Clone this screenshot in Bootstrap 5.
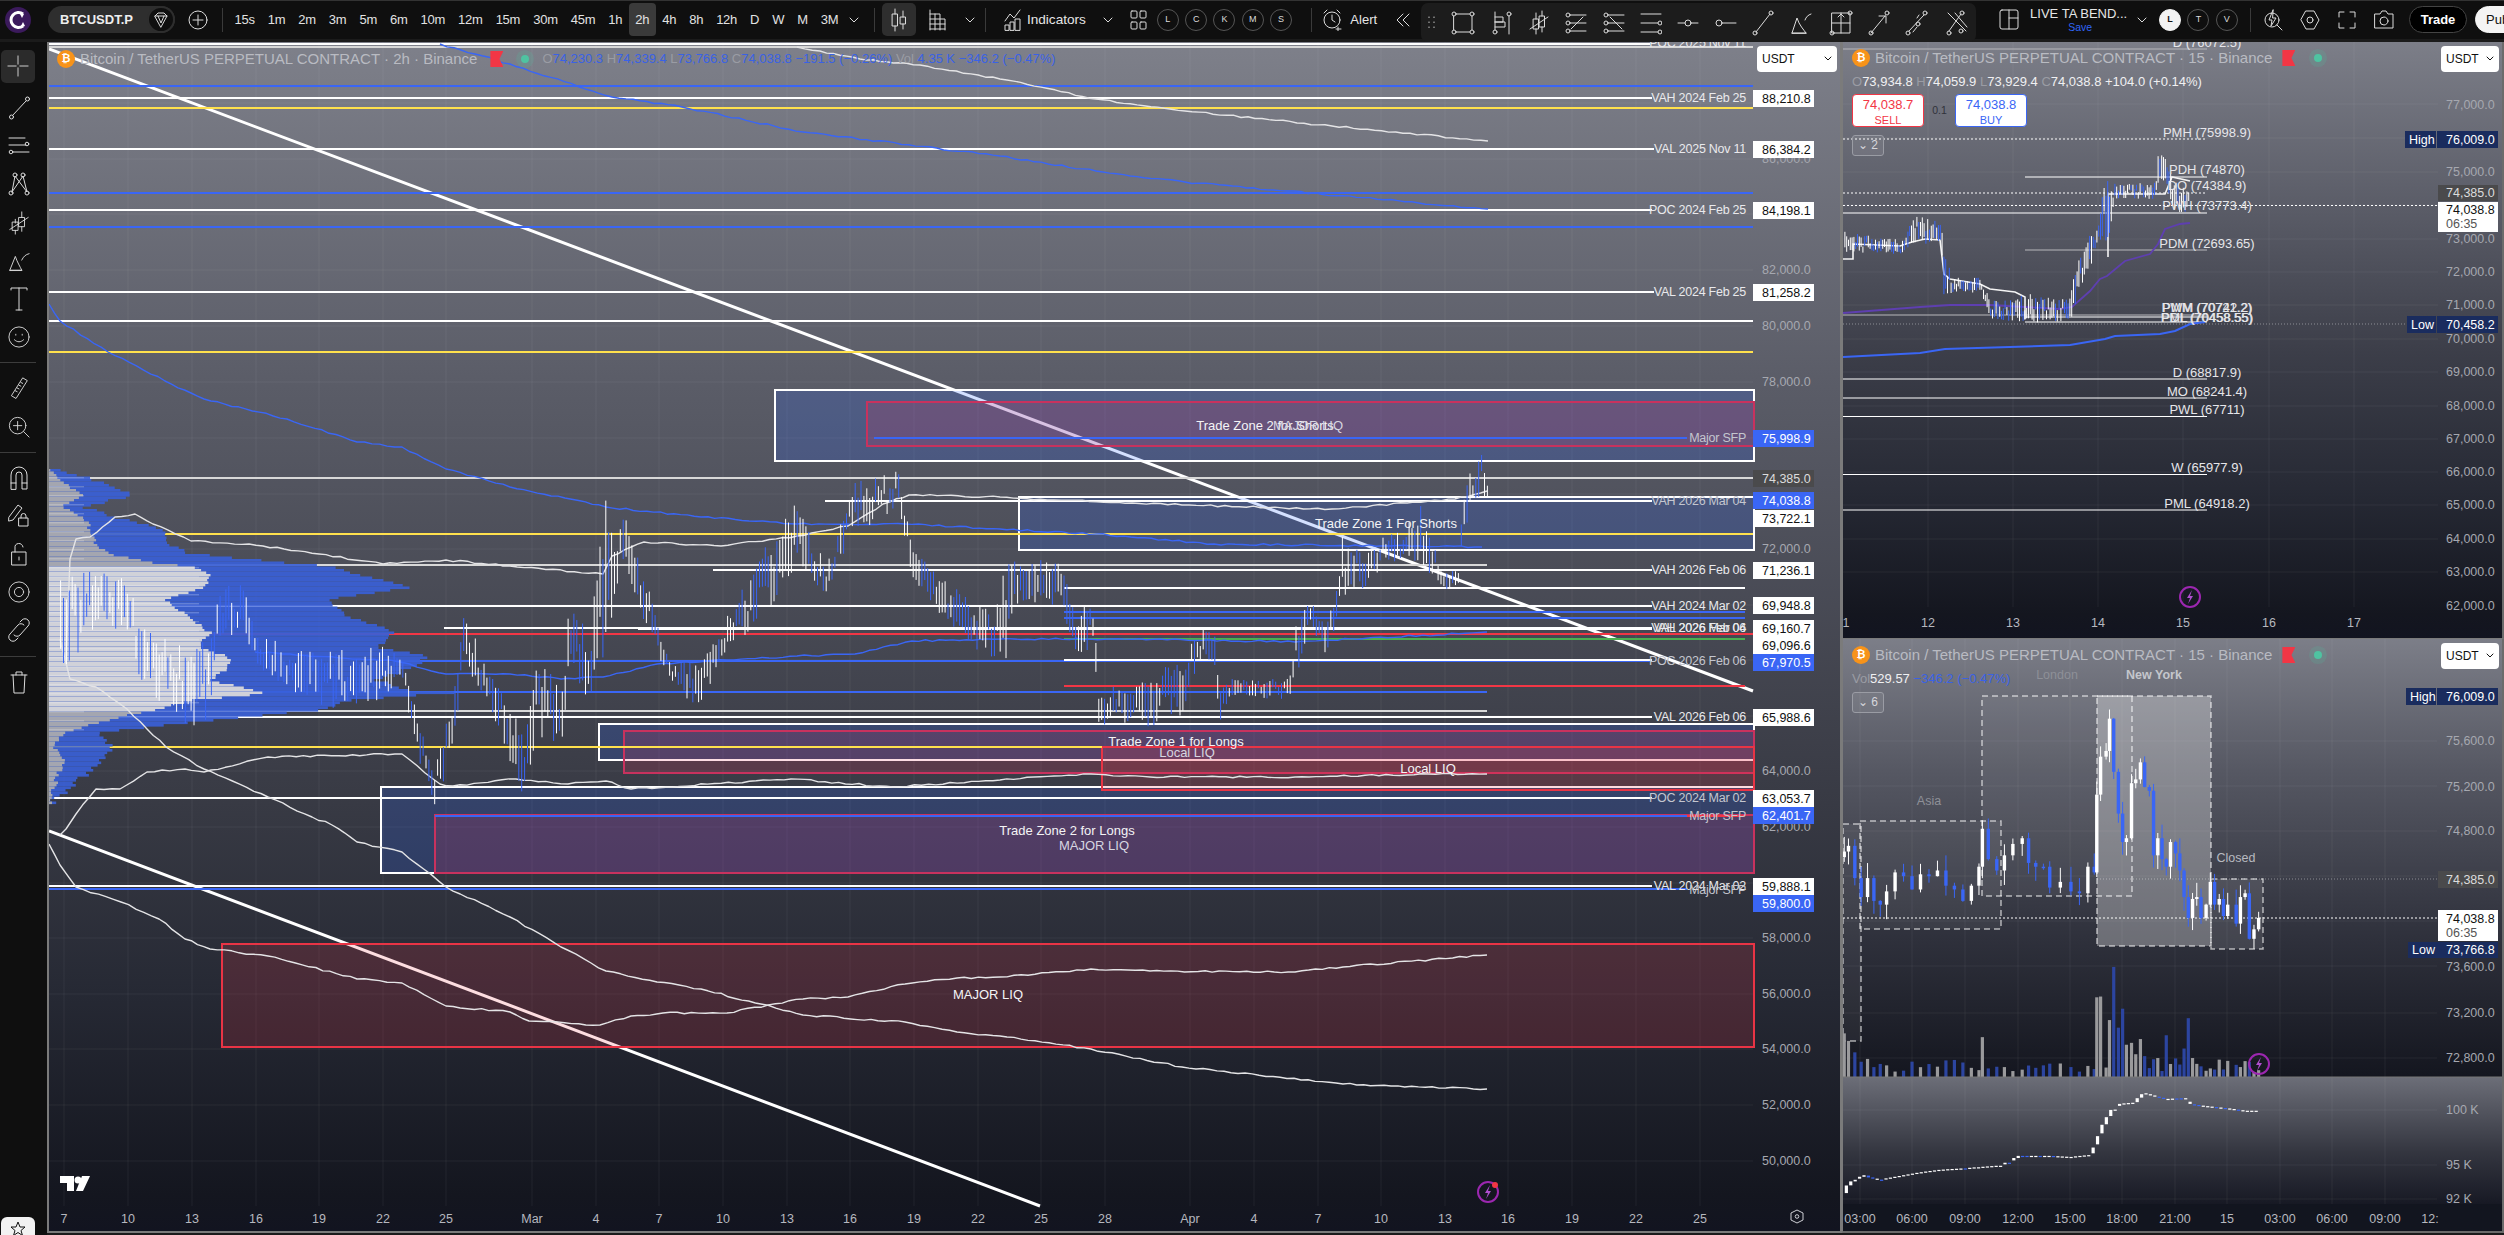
<!doctype html>
<html lang="en">
<head>
<meta charset="utf-8">
<title>BTCUSDT.P</title>
<link href="https://cdn.jsdelivr.net/npm/bootstrap@5.3.0/dist/css/bootstrap.min.css" rel="stylesheet">
<style>
html,body{height:100%;margin:0;background:#1b1b1b;overflow:hidden;font-family:"Liberation Sans",sans-serif}
.app{width:2504px;height:1235px;position:relative;overflow:hidden}
.topbar{height:39px;background:#0f0f0f;border-top:1px solid #333;color:#e6e6e6;font-size:13px;white-space:nowrap}
.ico{fill:none;stroke:#dcdcdc;stroke-width:1;stroke-linecap:round;stroke-linejoin:round;flex:none;display:block}
.logo-c{margin-left:4px;width:28px;height:30px}
.sym-pill{margin-left:16px;width:127px;height:27px;background:#2e2e2e;border-radius:14px;font-weight:700;padding-left:12px;font-size:13px;color:#eee}
.sym-end{width:28px;height:27px;background:#0f0f0f;border:2px solid #2e2e2e;border-radius:50%}
.plus{margin-left:13px}
.vsep{width:1px;height:24px;background:#3a3a3a;flex:none}
.s14{margin-left:14px}
.tfs{margin-left:5px}
.tf{padding:0 6.5px;height:33px;line-height:33px;border-radius:4px;letter-spacing:-.25px;color:#e2e2e2}
.tf.on{background:#3a3a3a}
.mx9{margin-left:9px}.mx7{margin-left:7px}.mx10{margin-left:10px}.mx12{margin-left:12px}.mx17{margin-left:17px}.mx6{margin-left:6px}.mx4{margin-left:4px}.mx15{margin-left:15px}.mx19{margin-left:19px}.mx18{margin-left:18px}.mx13{margin-left:13px}
.ind-t{font-size:13.6px}
.act-box{width:34px;height:33px;background:#2e2e2e;border-radius:5px}
.circ{width:22px;height:22px;border:1px solid #555;border-radius:50%;font-size:9px;margin-right:6.3px;flex:none;color:#dcdcdc}
.circ.full{background:#f2f2f2;color:#111;border-color:#f2f2f2;font-weight:700}
.floatbar{position:absolute;left:1421px;top:3px;width:555px;height:39px;background:#1c1c1c;border-radius:7px;z-index:5;padding:0 7px 0 7px}
.right-tools{margin-left:auto;margin-right:-41px}
.layout-name{line-height:1;width:100px;margin-left:11px}
.layout-name b{font-weight:400;font-size:13px;display:block}
.layout-name span{font-size:10.5px;color:#2f66f6;display:block;text-align:center;margin-top:2px}
.pill{height:27px;border-radius:14px;font-size:13px;font-weight:700;line-height:25px;border:1px solid #444}
.pill.dark{background:#000;color:#fff;width:58px}
.pill.lite{background:#f4f4f4;color:#111;width:70px;margin-left:8px;font-weight:400;border-color:#f4f4f4;padding-left:10px}
.content{height:1195px;margin-top:3px}
.side{width:47px;background:#0f0f0f;padding-top:8px;position:relative;flex:none}
.side .ico{margin:0 auto;width:22px;height:24px}
.side-wrap{width:37px}
.sl{height:38.2px}
.crossbtn{width:34px;height:33px;background:#2b2b2b;border-radius:5px;margin-left:1px}
.sd{height:1px;background:#3c3c3c;width:36px}
.starbox{position:absolute;left:1px;top:1175px;width:34px;height:24px;background:#f2f2f2;border-radius:6px}
.panem{position:relative;width:1795px;height:1191px;border:2px solid #7b7b7b;border-top:0;flex:none;background:linear-gradient(180deg,#7e808a 0,#5a5c67 29%,#383a44 64%,#262934 80%,#14161f 97%,#121420 100%);overflow:hidden}
.panecol{width:662px;flex:none}
.panet{position:relative;height:597px;border-left:1px solid #7b7b7b;border-right:2px solid #6b6b6b;border-bottom:1px solid #7b7b7b;background:linear-gradient(180deg,#7c7e88 0,#5a5c67 28%,#3c3e49 52%,#262934 76%,#14161f 96%,#121420 100%);overflow:hidden}
.paneb{position:relative;height:594px;border-left:1px solid #7b7b7b;border-right:2px solid #6b6b6b;border-bottom:2px solid #6b6b6b;background:linear-gradient(180deg,#6c6e78 0,#33353f 60%,#171924 100%) 0 438px/100% 127px no-repeat,linear-gradient(180deg,#7c7e88 0,#565863 30%,#2f313c 68%,#14161f 100%) 0 0/100% 438px no-repeat,#12151f;overflow:hidden}
.chart{display:block;position:absolute;left:0;top:0}
.chart text{font-family:"Liberation Sans",sans-serif;font-size:12.5px}
.g{stroke:rgba(255,255,255,.06);fill:none}
.lw{stroke:#fff;stroke-width:2;fill:none}
.lg{stroke:#d8d8d8;stroke-width:2;fill:none}
.lb{stroke:#3a66f5;stroke-width:2;fill:none}
.ly{stroke:#ffe14d;stroke-width:2;fill:none}
.lr{stroke:#f23645;stroke-width:2;fill:none}
.lgr{stroke:#4caf50;stroke-width:2;fill:none}
.diag{stroke:#fff;stroke-width:3;fill:none}
.cw{stroke:#e4e4e6;stroke-width:1.4;fill:none;stroke-linejoin:round}
.cb{stroke:#3a66f5;stroke-width:1.4;fill:none;stroke-linejoin:round}
.zw{fill:rgba(41,98,255,.2);stroke:#fff;stroke-width:2}
.zc{fill:rgba(235,50,90,.17);stroke:#c8325e;stroke-width:2}
.zr{fill:rgba(242,54,69,.17);stroke:#e93445;stroke-width:2}
.lab{fill:#e9e9ec;text-anchor:end;letter-spacing:-.25px}
.lab2{fill:#c4c6cf;text-anchor:end;letter-spacing:-.25px}
.ax{fill:#a6a8b0}
.mid{fill:#f4f4f6;text-anchor:middle;font-size:13px!important}
.mid2{fill:#d6d6e0;text-anchor:middle;font-size:13px!important}
.tgw{fill:#fff}.tgb{fill:#3a66f5}.tgg{fill:#4a4a4c}.tgn{fill:#1a2c5e}
.tx-k{fill:#111}.tx-w{fill:#fff}.tx-d{fill:#dcdcdc}
.tx-t{fill:#555}
.mlab{fill:#e6e6ea;text-anchor:middle;font-size:13px!important}
.ctr{text-anchor:middle;fill:#b6b8bf}
.ctr.dim{fill:#8e9098}.ctr.ny{fill:#c4c6cc;font-weight:700}.ctr.cl{fill:#b8bac0}
.dot{stroke:#fff;stroke-width:1;stroke-dasharray:2 2;fill:none}
.dotd{stroke:rgba(255,255,255,.4);stroke-width:1;stroke-dasharray:1 2;fill:none}
.sess{stroke:rgba(255,255,255,.62);stroke-width:1.5;stroke-dasharray:6 4}
.s-a{fill:rgba(255,255,255,.05)}.s-n{fill:rgba(255,255,255,.3)}.s-c{fill:rgba(255,255,255,.1)}
.bolt{fill:#b04fd0}.ring{fill:none;stroke:#9c27b0;stroke-width:2}
.gearline{fill:none;stroke:#cfd0d6}
.legend{position:absolute;left:9px;top:7px;color:#b9bbc2;font-size:14px;line-height:1;z-index:2;white-space:nowrap}
.lg-main{left:8px;top:8px}
.coin{width:18px;height:18px;background:#f7931a;border-radius:50%;color:#fff;font-size:11px;font-weight:700;flex:none}
.ttl{margin-left:5px;font-size:15px}
.flag{width:13px;height:16px;background:#f23645;clip-path:polygon(0 0,100% 0,70% 50%,100% 100%,0 100%);flex:none}
.greendot{width:8px;height:8px;background:#4fc3a1;border-radius:50%;box-shadow:0 0 0 5px rgba(79,195,161,.18);flex:none}
.ohlc{font-size:13px;color:#9a9ca4}
.ohlc i{font-style:normal;color:#3a62e5}
.ohlc b{font-weight:400;color:#f0f0f2}
.mt6{margin-top:6px}.mt8{margin-top:8px}.mt7{margin-top:7px}
.usdt{position:absolute;z-index:3;background:#fff;color:#111;border-radius:4px;font-size:12px;height:26px;line-height:26px;padding:0 5px}
.usm{left:1708px;top:4px;width:80px}
.ust{left:598px;top:4px;width:58px}
.usdt .ico{stroke:#111}
.tradeb{width:72px;height:33px;background:#fff;border-radius:4px;font-size:13px;line-height:1.1;padding-top:3px;text-align:center;display:block}
.tradeb.sell{border:1px solid #f23645;color:#f23645}
.tradeb.buy{border:1px solid #3a66f5;color:#3a66f5}
.tradeb small{font-size:11px;display:block;margin-top:2px}
.qty{font-size:10.5px;color:#30323a;width:31px;text-align:center}
.coll{width:32px;height:21px;border:1px solid #9a9ca4;border-radius:3px;background:rgba(255,255,255,.08);color:#d6d6dc;font-size:12px;line-height:19px;text-align:center}
</style>
</head>
<body>
<div class="app d-flex flex-column">

<header class="topbar d-flex align-items-center">
  <svg class="logo-c" viewBox="0 0 28 30"><circle cx="14" cy="15" r="13" fill="#3b1a5c"/><path d="M19 9a7.500 7.500 0 1 0 0 12" fill="none" stroke="#fff" stroke-width="3"/><path d="M15 7l5 2-2 4z" fill="#fff"/><path d="M16 23l5-2-2-4z" fill="#fff"/></svg>
  <div class="sym-pill d-flex align-items-center justify-content-between"><span>BTCUSDT.P</span>
    <span class="sym-end d-flex align-items-center justify-content-center"><svg class="ico" width="14" height="16" viewBox="0 0 14 16"><path d="M1 4l3-3h6l3 3-6 11zM1 4h12M4 4l3 7 3-7"/></svg></span></div>
  <svg class="ico plus" width="20" height="20" viewBox="0 0 20 20"><circle cx="10" cy="10" r="9"/><path d="M10 5v10M5 10h10"/></svg>
  <span class="vsep s14"></span>
  <div class="tfs d-flex align-items-center">
    <span class="tf">15s</span><span class="tf">1m</span><span class="tf">2m</span><span class="tf">3m</span><span class="tf">5m</span><span class="tf">6m</span><span class="tf">10m</span><span class="tf">12m</span><span class="tf">15m</span><span class="tf">30m</span><span class="tf">45m</span><span class="tf">1h</span><span class="tf on">2h</span><span class="tf">4h</span><span class="tf">8h</span><span class="tf">12h</span><span class="tf">D</span><span class="tf">W</span><span class="tf">M</span><span class="tf">3M</span>
  </div>
  <svg class="ico mx4" width="10" height="8" viewBox="0 0 10 8"><path d="M1 2l4 4 4-4"/></svg>
  <span class="vsep mx15"></span>
  <span class="act-box d-flex align-items-center justify-content-center mx7"><svg class="ico" width="18" height="24" viewBox="0 0 18 24"><path d="M5 1v5M5 18v5M13 3v6M13 16v5"/><rect x="2.500" y="6" width="5" height="12"/><rect x="10.500" y="9" width="5" height="7"/></svg></span>
  <svg class="ico mx12" width="18" height="22" viewBox="0 0 18 22"><path d="M2 1v20M2 5h10v16M2 10h15v11M2 15h15M2 20h15M7 5v16"/></svg>
  <svg class="ico mx19" width="10" height="8" viewBox="0 0 10 8"><path d="M1 2l4 4 4-4"/></svg>
  <span class="vsep mx10"></span>
  <svg class="ico mx18" width="17" height="22" viewBox="0 0 17 22"><path d="M1 12l5-7 4 4 6-8M1 21v-5h4v5zM6 21v-8h4v8zM11 21v-11h5v11z"/></svg>
  <span class="mx6 ind-t">Indicators</span>
  <svg class="ico mx17" width="10" height="8" viewBox="0 0 10 8"><path d="M1 2l4 4 4-4"/></svg>
  <svg class="ico mx17" width="17" height="20" viewBox="0 0 17 20"><rect x="1" y="1" width="6" height="7" rx="1"/><rect x="10" y="1" width="6" height="7" rx="1"/><rect x="1" y="12" width="6" height="7" rx="1"/><rect x="10" y="12" width="6" height="7" rx="1"/></svg>
  <div class="d-flex align-items-center mx10">
    <span class="circ d-flex align-items-center justify-content-center">L</span><span class="circ d-flex align-items-center justify-content-center">C</span><span class="circ d-flex align-items-center justify-content-center">K</span><span class="circ d-flex align-items-center justify-content-center">M</span><span class="circ d-flex align-items-center justify-content-center">S</span>
  </div>
  <span class="vsep mx13"></span>
  <svg class="ico mx10" width="21" height="22" viewBox="0 0 21 22"><circle cx="10" cy="11" r="8"/><path d="M10 6v5l3 2M2 4l3-3M18 4l-3-3M16 18v4M14 20h5"/></svg>
  <span class="mx7">Alert</span>
  <svg class="ico mx19" width="14" height="14" viewBox="0 0 14 14"><path d="M7 1L1 7l6 6M13 1L7 7l6 6"/></svg>

  <div class="right-tools d-flex align-items-center">
    <svg class="ico" width="20" height="21" viewBox="0 0 20 21"><rect x="1" y="1" width="18" height="19" rx="2"/><path d="M10 1v19M10 9h9"/></svg>
    <div class="layout-name"><b>LIVE TA BEND...</b><span>Save</span></div>
    <svg class="ico mx7" width="10" height="8" viewBox="0 0 10 8"><path d="M1 2l4 4 4-4"/></svg>
    <span class="circ full d-flex align-items-center justify-content-center mx12">L</span>
    <span class="circ d-flex align-items-center justify-content-center">T</span>
    <span class="circ d-flex align-items-center justify-content-center">V</span>
    <span class="vsep mx6"></span>
    <svg class="ico mx12" width="20" height="22" viewBox="0 0 20 22"><circle cx="9" cy="11" r="7"/><path d="M14 16l5 5M10 1L6 11h3l-1 6 5-8h-3z"/></svg>
    <svg class="ico mx17" width="20" height="20" viewBox="0 0 20 20"><path d="M6 1h8l5 9-5 9H6l-5-9z"/><circle cx="10" cy="10" r="3"/></svg>
    <svg class="ico mx18" width="18" height="18" viewBox="0 0 18 18"><path d="M1 6V1h5M12 1h5v5M17 12v5h-5M6 17H1v-5"/></svg>
    <svg class="ico mx18" width="20" height="19" viewBox="0 0 20 19"><path d="M1 4h5l2-3h4l2 3h5v14H1z"/><circle cx="10" cy="11" r="4"/></svg>
    <span class="pill dark mx15 text-center">Trade</span>
    <span class="pill lite">Publish</span>
  </div>
</header>

<div class="floatbar d-flex align-items-center justify-content-between">
  <svg class="ico" width="8" height="16" viewBox="0 0 8 16"><path d="M1 2v.5M6 2v.5M1 7v.5M6 7v.5M1 12v.5M6 12v.5"/></svg>
  <svg class="ico" width="24" height="24" viewBox="0 0 24 24"><rect x="3" y="3" width="18" height="18"/><circle cx="3" cy="3" r="2" fill="#1c1c1c"/><circle cx="21" cy="3" r="2" fill="#1c1c1c"/><circle cx="3" cy="21" r="2" fill="#1c1c1c"/><circle cx="21" cy="21" r="2" fill="#1c1c1c"/></svg>
  <svg class="ico" width="22" height="24" viewBox="0 0 22 24"><path d="M4 1v18M18 5v18M4 6h8v5H4M4 11h10v5H4"/><circle cx="4" cy="21" r="2"/><circle cx="18" cy="3" r="2"/></svg>
  <svg class="ico" width="22" height="26" viewBox="0 0 22 26"><path d="M2 19L20 7M8 3v6M8 19v5M14 1v5M14 17v5"/><rect x="5.500" y="9" width="5" height="10"/><rect x="11.500" y="6" width="5" height="11"/></svg>
  <svg class="ico" width="22" height="24" viewBox="0 0 22 24"><path d="M5 4h16M5 12h16M5 20h16M6 18L18 6"/><circle cx="3" cy="4" r="2"/><circle cx="3" cy="12" r="2"/><circle cx="3" cy="20" r="2"/></svg>
  <svg class="ico" width="22" height="24" viewBox="0 0 22 24"><path d="M5 4h16M5 12h16M5 20h16M7 6l12 12"/><circle cx="3" cy="4" r="2"/><circle cx="3" cy="12" r="2"/><circle cx="3" cy="20" r="2"/></svg>
  <svg class="ico" width="22" height="24" viewBox="0 0 22 24"><path d="M1 3h20M1 12h17M1 21h17"/><circle cx="20" cy="12" r="2"/><circle cx="20" cy="21" r="2"/></svg>
  <svg class="ico" width="22" height="10" viewBox="0 0 22 10"><path d="M1 5h7M14 5h7"/><circle cx="11" cy="5" r="3"/></svg>
  <svg class="ico" width="22" height="10" viewBox="0 0 22 10"><path d="M7 5h14"/><circle cx="4" cy="5" r="3"/></svg>
  <svg class="ico" width="22" height="26" viewBox="0 0 22 26"><path d="M4 22L18 4"/><circle cx="3" cy="23" r="2"/><circle cx="19" cy="3" r="2"/></svg>
  <svg class="ico" width="24" height="24" viewBox="0 0 24 24"><path d="M3 22L8 7c2 7 7 12 9 15zM3 22h14M16 9c1-3 3-5 6-6"/></svg>
  <svg class="ico" width="24" height="26" viewBox="0 0 24 26"><rect x="3" y="3" width="18" height="20"/><path d="M3 13h18M12 3v20M9 7l3-3 3 3"/><circle cx="3" cy="23" r="2"/><circle cx="21" cy="3" r="2"/></svg>
  <svg class="ico" width="22" height="26" viewBox="0 0 22 26"><path d="M3 23L17 6M11 6h7v7"/><circle cx="3" cy="23" r="2"/><circle cx="19" cy="3" r="2"/></svg>
  <svg class="ico" width="24" height="26" viewBox="0 0 24 26"><path d="M4 21L19 5M12 8l2-3M8 22l4-5"/><circle cx="3" cy="23" r="2"/><circle cx="20" cy="3" r="2"/><circle cx="13" cy="14" r="2"/></svg>
  <svg class="ico" width="24" height="26" viewBox="0 0 24 26"><path d="M3 3l18 18M4 21L16 4M10 3l12 14"/><circle cx="4" cy="23" r="2"/><circle cx="16" cy="21" r="2"/><circle cx="17" cy="3" r="2"/></svg>
</div>

<div class="content d-flex">
  <aside class="side d-flex flex-column">
    <div class="side-wrap">
      <div class="crossbtn d-flex align-items-center"><svg class="ico" viewBox="0 0 24 24"><path d="M12 1v9M12 14v9M1 12h9M14 12h9"/></svg></div>
      <div class="sl d-flex align-items-center mt6"><svg class="ico" viewBox="0 0 22 24"><path d="M5 19L18 5"/><circle cx="3.500" cy="21" r="2"/><circle cx="19.500" cy="3" r="2"/></svg></div>
      <div class="sl d-flex align-items-center"><svg class="ico" viewBox="0 0 22 24"><path d="M1 4h16M1 11h17M5 18h16"/><circle cx="19" cy="10" r="1.800"/><circle cx="3" cy="18" r="1.800"/></svg></div>
      <div class="sl d-flex align-items-center"><svg class="ico" viewBox="0 0 22 24"><path d="M4 20L7 4l12 16L15 4 4 20"/><circle cx="3" cy="21" r="2"/><circle cx="7" cy="3" r="2"/><circle cx="15" cy="3" r="2"/><circle cx="19" cy="21" r="2"/></svg></div>
      <div class="sl d-flex align-items-center"><svg class="ico" viewBox="0 0 22 26"><path d="M1 20L21 7M7 9v4M7 21v4M14 1v6M14 17v5"/><rect x="4" y="12" width="6" height="9"/><rect x="11" y="7" width="6" height="10"/></svg></div>
      <div class="sl d-flex align-items-center"><svg class="ico" viewBox="0 0 24 24"><path d="M2 22L8 7c2 6 5 11 7 15zM2 22h13M15 11c2-4 4-6 8-7"/></svg></div>
      <div class="sl d-flex align-items-center"><svg class="ico" viewBox="0 0 20 24"><path d="M2 3V1h16v2M10 1v22M7 23h6"/></svg></div>
      <div class="sl d-flex align-items-center"><svg class="ico" viewBox="0 0 24 24"><circle cx="12" cy="12" r="11"/><path d="M8.500 9v1M15.500 9v1M7 15c3 3 7 3 10 0"/></svg></div>
      <div class="sd mt6"></div>
      <div class="sl d-flex align-items-center mt6"><svg class="ico" viewBox="0 0 20 26"><path d="M2 21L14 2l5 3L7 24zM6 16l2 1M8 13l2 1M10 10l2 1M12 7l2 1"/></svg></div>
      <div class="sl d-flex align-items-center"><svg class="ico" viewBox="0 0 24 24"><circle cx="10.500" cy="10.500" r="9"/><path d="M17 17l6 6M10.500 6v9M6 10.500h9"/></svg></div>
      <div class="sd mt6"></div>
      <div class="sl d-flex align-items-center mt6"><svg class="ico" viewBox="0 0 20 24"><path d="M2 23V9a8 8 0 0 1 16 0v14h-5V9a3 3 0 0 0-6 0v14zM2 17h5M13 17h5"/></svg></div>
      <div class="sl d-flex align-items-center"><svg class="ico" viewBox="0 0 22 24"><path d="M1 13L10 1l4 3-9 12-4 1zM13 14v-2a2.500 2.500 0 0 1 5 0v2M11 14h9v8h-9z"/></svg></div>
      <div class="sl d-flex align-items-center"><svg class="ico" viewBox="0 0 20 24"><path d="M3 10h14v13H3zM6 10V6a4 4 0 0 1 8-1M10 15v3"/></svg></div>
      <div class="sl d-flex align-items-center"><svg class="ico" viewBox="0 0 24 24"><circle cx="12" cy="12" r="11"/><circle cx="12" cy="12" r="5"/></svg></div>
      <div class="sl d-flex align-items-center"><svg class="ico" viewBox="0 0 22 24"><path d="M12 4l2-2a4 4 0 0 1 6 6l-8 9a4 4 0 0 1-6 0M10 20l-2 2a4 4 0 0 1-6-6l8-9a4 4 0 0 1 6 0"/></svg></div>
      <div class="sd mt6"></div>
      <div class="sl d-flex align-items-center mt6"><svg class="ico" viewBox="0 0 18 24"><path d="M1 5h16M6 5V2h6v3M3 5l1 18h10l1-18"/></svg></div>
    </div>
    <div class="starbox d-flex align-items-center justify-content-center"><svg width="16" height="16" viewBox="0 0 16 16"><path d="M8 1l2 5h5l-4 3.500 1.500 5L8 11.500 3.500 14.500 5 9.500 1 6h5z" fill="none" stroke="#111"/></svg></div>
  </aside>

  <section class="panem">
    <div class="legend lg-main d-flex align-items-center">
      <span class="coin d-flex align-items-center justify-content-center">₿</span>
      <span class="ttl">Bitcoin / TetherUS PERPETUAL CONTRACT · 2h · Binance</span>
      <span class="flag mx13"></span>
      <span class="greendot mx18"></span>
      <span class="ohlc mx13">O<i>74,230.3</i> H<i>74,339.4</i> L<i>73,766.8</i> C<i>74,038.8</i> <i>−191.5 (−0.26%)</i> Vol<i> 4.35 K</i> <i>−346.2 (−0.47%)</i></span>
    </div>
    <div class="usdt usm d-flex align-items-center justify-content-between"><span>USDT</span><svg class="ico" width="8" height="6" viewBox="0 0 8 6"><path d="M1 1l3 3 3-3"/></svg></div>
    <svg class="chart" width="1791" height="1189" viewBox="49 43 1791 1189">
      <path class="g" d="M64 43V1207M128 43V1207M192 43V1207M256 43V1207M319 43V1207M383 43V1207M446 43V1207M532 43V1207M596 43V1207M659 43V1207M723 43V1207M787 43V1207M850 43V1207M914 43V1207M978 43V1207M1041 43V1207M1105 43V1207M1190 43V1207M1254 43V1207M1318 43V1207M1381 43V1207M1445 43V1207M1508 43V1207M1572 43V1207M1636 43V1207M1700 43V1207M49 104H1753M49 160H1753M49 215H1753M49 271H1753M49 327H1753M49 383H1753M49 439H1753M49 495H1753M49 550H1753M49 606H1753M49 661H1753M49 717H1753M49 772H1753M49 828H1753M49 884H1753M49 939H1753M49 995H1753M49 1050H1753M49 1106H1753M49 1162H1753"/>
      <path class="diag" d="M49 50L1753 692M49 832L1040 1207"/>
      <g><rect class="zw" x="775" y="391" width="979" height="71"/><rect class="zw" x="1019" y="498" width="735" height="53"/><rect class="zw" x="599" y="725" width="1155" height="36"/><rect class="zw" x="381" y="788" width="1373" height="86"/>
      <rect class="zc" x="867" y="403" width="887" height="44"/><rect class="zc" x="624" y="732" width="1130" height="42"/><rect class="zr" x="1102" y="748" width="652" height="43"/><rect class="zc" x="435" y="816" width="1319" height="58"/><rect class="zr" x="222" y="945" width="1532" height="103"/></g>
      <path class="lb" d="M49 87H1753M49 194H1753M49 228H1753M874 439H1687M1064 613H1745M1064 619H1745M395 662H1652M49 693H1487M435 817H1687M49 890H1687"/>
      <path class="ly" d="M49 109H1753M49 353H1753M49 535H1753M49 748H1102"/>
      <path class="lr" d="M49 635H1753M1064 687H1745M1687 817H1745"/>
      <path class="lgr" d="M1064 640H1745"/>
      <path class="lg" d="M49 48H1753M49 479H1753M49 566H1487M49 712H1487"/>
      <path class="lw" d="M49 45H1650M49 99H1652M49 150H1654M49 211H1652M49 293H1654M49 322H1753M825 502H1652M713 571H1652M1064 589H1745M49 607H1652M444 629H1652M638 630H1652M1064 661H1652M49 718H1652M49 799H1652M49 887H1652"/>
      <g id="profile"></g>
      <path class="cb wig" d="M440 45L510 65 612 98 682 108 803 133 1000 157 1096 172 1185 183 1287 192 1488 210"/>
      <path class="cb wig" d="M49 305L60 322 108 353 165 382 204 400 287 420 357 443 402 448 446 470 510 488 606 508 701 518 797 525 905 525 1000 530 1096 535 1214 545 1482 548"/>
      <path class="cb wig" d="M255 653L395 662 446 675 510 675 561 680 603 678 657 665 797 657 855 655 912 642 1000 640 1160 640 1295 643 1487 633"/>
      <path class="cw wig" d="M797 48L820 52 860 60 920 66 1000 80 1096 100 1185 112 1332 127 1488 142"/>
      <path class="cw wig" d="M66 660L70 560 76 540 90 538 115 518 135 515 153 525 191 542 249 545 319 555 383 565 446 561 510 567 603 575 612 557 644 543 721 547 797 537 848 527 883 505 909 496 1000 498 1054 501 1182 506 1332 510 1455 500 1487 492"/>
      <path class="cw wig" d="M60 836L66 830 76 815 96 790 120 790 147 773 185 770 204 773 268 758 402 755 440 785 453 787 516 780 568 785 606 782 631 790 791 780 893 788 1000 781 1054 777 1091 775 1150 778 1295 778 1428 775 1487 775"/>
      <path class="cw wig" d="M60 640L70 680 96 688 127 710 147 730 166 748 204 770 268 798 312 818 332 826 357 843 402 853 446 888 510 918 561 948 606 972 657 983 701 990 803 1016 905 1023 957 1033 1000 1037 1091 1050 1182 1068 1343 1085 1487 1090"/>
      <path class="cw wig" d="M49 845L60 866 76 888 121 903 159 920 185 940 210 950 268 957 357 980 402 984 446 1007 510 1013 529 1022 600 1026 631 1017 663 1014 727 1014 803 1000 848 998 905 985 957 979 1000 978 1091 970 1150 972 1295 973 1343 968 1487 956"/>
      <path id="m-w" fill="none" stroke="#fff" stroke-width="1"/><path id="m-b" fill="none" stroke="#3a66f5" stroke-width="1"/>

      <text class="mid" x="1265" y="431">Trade Zone 2 for Shorts</text><text class="mid2" x="1308" y="431">MAJOR LIQ</text>
      <text class="mid" x="1386" y="529">Trade Zone 1 For Shorts</text>
      <text class="mid" x="1176" y="747">Trade Zone 1 for Longs</text><text class="mid2" x="1187" y="758">Local LIQ</text><text class="mid" x="1428" y="774">Local LIQ</text>
      <text class="mid" x="1067" y="836">Trade Zone 2 for Longs</text><text class="mid2" x="1094" y="851">MAJOR LIQ</text>
      <text class="mid" x="988" y="1000">MAJOR LIQ</text>

      <g><text class="lab" x="1746" y="48">POC 2025 Nov 11</text><text class="lab" x="1746" y="103">VAH 2024 Feb 25</text><text class="lab" x="1746" y="154">VAL 2025 Nov 11</text><text class="lab" x="1746" y="215">POC 2024 Feb 25</text><text class="lab" x="1746" y="297">VAL 2024 Feb 25</text><text class="lab2" x="1746" y="443">Major SFP</text><text class="lab2" x="1746" y="506">VAH 2026 Mar 04</text><text class="lab" x="1746" y="575">VAH 2026 Feb 06</text><text class="lab" x="1746" y="611">VAH 2024 Mar 02</text><text class="lab" x="1746" y="633">VAH 2026 Feb 06</text><text class="lab" x="1746" y="633">VAL 2026 Mar 04</text><text class="lab2" x="1746" y="666">POC 2026 Feb 06</text><text class="lab" x="1746" y="722">VAL 2026 Feb 06</text><text class="lab2" x="1746" y="803">POC 2024 Mar 02</text><text class="lab2" x="1746" y="821">Major SFP</text><text class="lab" x="1746" y="891">VAL 2024 Mar 02</text><text class="lab2" x="1746" y="895">Major SFP</text></g>

      <g><text class="ax" x="1762" y="164">86,000.0</text><text class="ax" x="1762" y="275">82,000.0</text><text class="ax" x="1762" y="331">80,000.0</text><text class="ax" x="1762" y="387">78,000.0</text><text class="ax" x="1762" y="554">72,000.0</text><text class="ax" x="1762" y="776">64,000.0</text><text class="ax" x="1762" y="832">62,000.0</text><text class="ax" x="1762" y="943">58,000.0</text><text class="ax" x="1762" y="999">56,000.0</text><text class="ax" x="1762" y="1054">54,000.0</text><text class="ax" x="1762" y="1110">52,000.0</text><text class="ax" x="1762" y="1166">50,000.0</text></g>

      <g><rect class="tgw" x="1753" y="91" width="61" height="17"/><text class="tx-k" x="1762" y="104">88,210.8</text>
      <rect class="tgw" x="1753" y="142" width="61" height="17"/><text class="tx-k" x="1762" y="155">86,384.2</text>
      <rect class="tgw" x="1753" y="203" width="61" height="17"/><text class="tx-k" x="1762" y="216">84,198.1</text>
      <rect class="tgw" x="1753" y="285" width="61" height="17"/><text class="tx-k" x="1762" y="298">81,258.2</text>
      <rect class="tgb" x="1753" y="431" width="61" height="17"/><text class="tx-w" x="1762" y="444">75,998.9</text>
      <rect class="tgg" x="1753" y="471" width="61" height="17"/><text class="tx-d" x="1762" y="484">74,385.0</text>
      <rect class="tgb" x="1753" y="493" width="61" height="17"/><text class="tx-w" x="1762" y="506">74,038.8</text>
      <rect class="tgw" x="1753" y="511" width="61" height="17"/><text class="tx-k" x="1762" y="524">73,722.1</text>
      <rect class="tgw" x="1753" y="563" width="61" height="17"/><text class="tx-k" x="1762" y="576">71,236.1</text>
      <rect class="tgw" x="1753" y="598" width="61" height="17"/><text class="tx-k" x="1762" y="611">69,948.8</text>
      <rect class="tgw" x="1753" y="621" width="61" height="17"/><text class="tx-k" x="1762" y="634">69,160.7</text>
      <rect class="tgw" x="1753" y="638" width="61" height="17"/><text class="tx-k" x="1762" y="651">69,096.6</text>
      <rect class="tgb" x="1753" y="655" width="61" height="17"/><text class="tx-w" x="1762" y="668">67,970.5</text>
      <rect class="tgw" x="1753" y="710" width="61" height="17"/><text class="tx-k" x="1762" y="723">65,988.6</text>
      <rect class="tgw" x="1753" y="791" width="61" height="17"/><text class="tx-k" x="1762" y="804">63,053.7</text>
      <rect class="tgb" x="1753" y="808" width="61" height="17"/><text class="tx-w" x="1762" y="821">62,401.7</text>
      <rect class="tgw" x="1753" y="879" width="61" height="17"/><text class="tx-k" x="1762" y="892">59,888.1</text>
      <rect class="tgb" x="1753" y="896" width="61" height="17"/><text class="tx-w" x="1762" y="909">59,800.0</text></g>

      <g><text class="ctr" x="64" y="1224">7</text><text class="ctr" x="128" y="1224">10</text><text class="ctr" x="192" y="1224">13</text><text class="ctr" x="256" y="1224">16</text><text class="ctr" x="319" y="1224">19</text><text class="ctr" x="383" y="1224">22</text><text class="ctr" x="446" y="1224">25</text><text class="ctr" x="532" y="1224">Mar</text><text class="ctr" x="596" y="1224">4</text><text class="ctr" x="659" y="1224">7</text><text class="ctr" x="723" y="1224">10</text><text class="ctr" x="787" y="1224">13</text><text class="ctr" x="850" y="1224">16</text><text class="ctr" x="914" y="1224">19</text><text class="ctr" x="978" y="1224">22</text><text class="ctr" x="1041" y="1224">25</text><text class="ctr" x="1105" y="1224">28</text><text class="ctr" x="1190" y="1224">Apr</text><text class="ctr" x="1254" y="1224">4</text><text class="ctr" x="1318" y="1224">7</text><text class="ctr" x="1381" y="1224">10</text><text class="ctr" x="1445" y="1224">13</text><text class="ctr" x="1508" y="1224">16</text><text class="ctr" x="1572" y="1224">19</text><text class="ctr" x="1636" y="1224">22</text><text class="ctr" x="1700" y="1224">25</text></g>

      <path class="gearline" d="M1791 1214l6-3 6 3v7l-6 3-6-3z"/><circle class="gearline" cx="1797" cy="1217.500" r="1.800"/>
      <g fill="#fff"><path d="M60 1177h14v15h-7v-8h-7z"/><circle cx="78" cy="1181" r="3.500"/><path d="M82 1177h8l-7 15h-7z"/></g>
      <circle class="ring" cx="1488" cy="1193" r="10"/><path class="bolt" d="M1490 1186l-5 8h3l-2 6 5-8h-3z"/><circle cx="1495" cy="1186" r="3" fill="#f23645"/>
    </svg>
  </section>

  <div class="panecol d-flex flex-column">
    <section class="panet">
      <div class="legend d-flex flex-column">
        <div class="d-flex align-items-center"><span class="coin d-flex align-items-center justify-content-center">₿</span><span class="ttl">Bitcoin / TetherUS PERPETUAL CONTRACT · 15 · Binance</span><span class="flag mx10"></span><span class="greendot mx19"></span></div>
        <div class="ohlc mt8">O<b>73,934.8</b> H<b>74,059.9</b> L<b>73,929.4</b> C<b>74,038.8</b> <b>+104.0 (+0.14%)</b></div>
        <div class="d-flex align-items-center mt6"><span class="tradeb sell">74,038.7<small>SELL</small></span><span class="qty">0.1</span><span class="tradeb buy">74,038.8<small>BUY</small></span></div>
        <div class="coll mt8">⌄ 2</div>
      </div>
      <div class="usdt ust d-flex align-items-center justify-content-between"><span>USDT</span><svg class="ico" width="8" height="6" viewBox="0 0 8 6"><path d="M1 1l3 3 3-3"/></svg></div>
      <svg class="chart" width="659" height="596" viewBox="1843 43 659 596">
        <path class="g" d="M1928 43V608M2013 43V608M2098 43V608M2183 43V608M2269 43V608M2354 43V608M1843 105H2438M1843 139H2438M1843 173H2438M1843 206H2438M1843 240H2438M1843 273H2438M1843 306H2438M1843 340H2438M1843 373H2438M1843 407H2438M1843 440H2438M1843 473H2438M1843 506H2438M1843 540H2438M1843 573H2438"/>
        <path d="M1843 50H2207M1843 316H2207M2025 251H2207" stroke="#b8b8bc" stroke-width="1" fill="none"/>
        <path d="M2025 178H2207M1843 214H2207M2025 318H2207M2025 323H2207M1843 380H2207M1843 399H2207M1843 417.500H2207M1843 475.500H2207M1843 511H2207" stroke="#fff" stroke-width="1.200" fill="none"/>
        <path class="dot" d="M1843 140H2206M1843 194H2206M1843 206.500H2438"/><path class="dotd" d="M1843 325H2407"/>
        <path d="M1843 358L1920 354 1945 350 2070 346 2105 340 2115 337 2160 335 2175 332 2190 325 2205 323" fill="none" stroke="#3a66f5" stroke-width="2"/>
        <path d="M1843 314L1920 308 1950 306 1990 306 2060 310 2072 308 2090 292 2100 280 2107 277 2125 262 2150 255 2158 245 2165 230 2180 225 2190 224" fill="none" stroke="#5e3fb0" stroke-width="1.800"/>
        <path d="M1843 260L1853 260 1853 245 1900 247 1912 243 1925 240 1940 241 1944 275 1950 280 1980 285 1990 290 2015 293 2025 298 2025 320M2108 258L2108 195 2130 195 2150 195 2165 195 2172 178 2190 182" fill="none" stroke="#f4f4f4" stroke-width="1.600"/>
        <path id="t-w" fill="none" stroke="#fff" stroke-width="1"/><path id="t-b" fill="none" stroke="#3a66f5" stroke-width="1"/>
        <g><text class="mlab" x="2207" y="48">D (76072.5)</text><text class="mlab" x="2207" y="138">PMH (75998.9)</text><text class="mlab" x="2207" y="175">PDH (74870)</text><text class="mlab" x="2207" y="191">DO (74384.9)</text><text class="mlab" x="2207" y="211">PWH (73773.4)</text><text class="mlab" x="2207" y="249">PDM (72693.65)</text><text class="mlab" x="2207" y="313">PWM (70742.2)</text><text class="mlab" x="2207" y="313">PMM (70721.2)</text><text class="mlab" x="2207" y="323">PML (70458.55)</text><text class="mlab" x="2207" y="323">PDL (70458.55)</text><text class="mlab" x="2207" y="378">D (68817.9)</text><text class="mlab" x="2207" y="397">MO (68241.4)</text><text class="mlab" x="2207" y="415">PWL (67711)</text><text class="mlab" x="2207" y="473">W (65977.9)</text><text class="mlab" x="2207" y="509">PML (64918.2)</text></g>
        <g><text class="ax" x="2446" y="110">77,000.0</text><text class="ax" x="2446" y="177">75,000.0</text><text class="ax" x="2446" y="244">73,000.0</text><text class="ax" x="2446" y="277">72,000.0</text><text class="ax" x="2446" y="310">71,000.0</text><text class="ax" x="2446" y="344">70,000.0</text><text class="ax" x="2446" y="377">69,000.0</text><text class="ax" x="2446" y="411">68,000.0</text><text class="ax" x="2446" y="444">67,000.0</text><text class="ax" x="2446" y="477">66,000.0</text><text class="ax" x="2446" y="510">65,000.0</text><text class="ax" x="2446" y="544">64,000.0</text><text class="ax" x="2446" y="577">63,000.0</text><text class="ax" x="2446" y="611">62,000.0</text></g>
        <rect class="tgn" x="2405" y="132" width="31" height="17"/><rect class="tgn" x="2437" y="132" width="61" height="17"/><text class="tx-w" x="2409" y="145">High</text><text class="tx-w" x="2446" y="145">76,009.0</text>
        <rect class="tgg" x="2438" y="186" width="60" height="16"/><text class="tx-d" x="2446" y="198">74,385.0</text>
        <rect class="tgw" x="2438" y="203" width="60" height="30"/><text class="tx-k" x="2446" y="215">74,038.8</text><text class="tx-t" x="2446" y="229">06:35</text>
        <rect class="tgn" x="2407" y="317" width="29" height="17"/><rect class="tgn" x="2437" y="317" width="61" height="17"/><text class="tx-w" x="2411" y="330">Low</text><text class="tx-w" x="2446" y="330">70,458.2</text>
        <g><text class="ctr" x="1846" y="628">1</text><text class="ctr" x="1928" y="628">12</text><text class="ctr" x="2013" y="628">13</text><text class="ctr" x="2098" y="628">14</text><text class="ctr" x="2183" y="628">15</text><text class="ctr" x="2269" y="628">16</text><text class="ctr" x="2354" y="628">17</text></g>
        <circle class="ring" cx="2190" cy="598" r="10"/><path class="bolt" d="M2192 591l-5 8h3l-2 6 5-8h-3z"/>
      </svg>
    </section>
    <section class="paneb">
      <div class="legend d-flex flex-column">
        <div class="d-flex align-items-center"><span class="coin d-flex align-items-center justify-content-center">₿</span><span class="ttl">Bitcoin / TetherUS PERPETUAL CONTRACT · 15 · Binance</span><span class="flag mx10"></span><span class="greendot mx19"></span></div>
        <div class="ohlc mt8">Vol<b>529.57</b> <i>−346.2 (−0.47%)</i></div>
        <div class="coll mt7">⌄ 6</div>
      </div>
      <div class="usdt ust d-flex align-items-center justify-content-between"><span>USDT</span><svg class="ico" width="8" height="6" viewBox="0 0 8 6"><path d="M1 1l3 3 3-3"/></svg></div>
      <svg class="chart" width="659" height="592" viewBox="1843 640 659 592">
        <path class="g" d="M1860 640V1205M1912 640V1205M1965 640V1205M2018 640V1205M2070 640V1205M2122 640V1205M2175 640V1205M2227 640V1205M2280 640V1205M2332 640V1205M2385 640V1205M1843 742H2437M1843 787H2437M1843 832H2437M1843 877H2437M1843 922H2437M1843 967H2437M1843 1014H2437M1843 1059H2437M1843 1111H2437M1843 1166H2437M1843 1200H2437"/>
        <rect class="sess s-a" x="1843" y="825" width="18" height="217"/>
        <rect class="sess s-a" x="1860" y="822" width="141" height="108"/>
        <rect class="sess s-a" x="1982" y="697" width="150" height="200"/>
        <rect class="sess s-n" x="2097" y="697" width="114" height="250"/>
        <rect class="sess s-c" x="2211" y="880" width="52" height="70"/>
        <text class="ctr dim" x="1929" y="806">Asia</text>
        <text class="ctr dim" x="2057" y="680">London</text>
        <text class="ctr ny" x="2154" y="680">New York</text>
        <text class="ctr cl" x="2236" y="863">Closed</text>
        <path class="dotd" d="M2097 880H2437"/><path class="dot" d="M1843 919H2437"/>
        <g id="vol"></g>
        <g id="b-c"></g>
        <path d="M1843 1078H2502" stroke="#777" stroke-width="1"/>
        <g id="sub"></g>
        <g><text class="ax" x="2446" y="746">75,600.0</text><text class="ax" x="2446" y="792">75,200.0</text><text class="ax" x="2446" y="836">74,800.0</text><text class="ax" x="2446" y="972">73,600.0</text><text class="ax" x="2446" y="1018">73,200.0</text><text class="ax" x="2446" y="1063">72,800.0</text><text class="ax" x="2446" y="1115">100 K</text><text class="ax" x="2446" y="1170">95 K</text><text class="ax" x="2446" y="1204">92 K</text></g>
        <rect class="tgn" x="2406" y="689" width="30" height="17"/><rect class="tgn" x="2437" y="689" width="61" height="17"/><text class="tx-w" x="2410" y="702">High</text><text class="tx-w" x="2446" y="702">76,009.0</text>
        <rect class="tgg" x="2438" y="872" width="60" height="17"/><text class="tx-d" x="2446" y="885">74,385.0</text>
        <rect class="tgw" x="2438" y="911" width="60" height="31"/><text class="tx-k" x="2446" y="924">74,038.8</text><text class="tx-t" x="2446" y="938">06:35</text>
        <rect class="tgn" x="2408" y="943" width="29" height="16"/><rect class="tgn" x="2437" y="943" width="61" height="16"/><text class="tx-w" x="2412" y="955">Low</text><text class="tx-w" x="2446" y="955">73,766.8</text>
        <g><text class="ctr" x="1860" y="1224">03:00</text><text class="ctr" x="1912" y="1224">06:00</text><text class="ctr" x="1965" y="1224">09:00</text><text class="ctr" x="2018" y="1224">12:00</text><text class="ctr" x="2070" y="1224">15:00</text><text class="ctr" x="2122" y="1224">18:00</text><text class="ctr" x="2175" y="1224">21:00</text><text class="ctr" x="2227" y="1224">15</text><text class="ctr" x="2280" y="1224">03:00</text><text class="ctr" x="2332" y="1224">06:00</text><text class="ctr" x="2385" y="1224">09:00</text><text class="ctr" x="2430" y="1224">12:</text></g>
        <circle class="ring" cx="2259" cy="1065" r="10"/><path class="bolt" d="M2261 1058l-5 8h3l-2 6 5-8h-3z"/>
      </svg>
    </section>
  </div>
</div>
</div>

<script src="https://cdn.jsdelivr.net/npm/bootstrap@5.3.0/dist/js/bootstrap.bundle.min.js"></script>
<script>
(function(){
  var s=12345;function R(){s|=0;s=s+0x6D2B79F5|0;var t=Math.imul(s^s>>>15,1|s);t=t+Math.imul(t^t>>>7,61|t)^t;return((t^t>>>14)>>>0)/4294967296;}
  var NS='http://www.w3.org/2000/svg';
  function el(p,n,a){var e=document.createElementNS(NS,n);for(var k in a)e.setAttribute(k,a[k]);p.appendChild(e);return e;}
  // staircase wiggle along the band curves
  document.querySelectorAll('.wig').forEach(function(p){var n=p.getAttribute('d').match(/[\d.]+/g).map(Number),d='';
    for(var i=0;i<n.length-2;i+=2){var x0=n[i],y0=n[i+1],x1=n[i+2],y1=n[i+3],m=Math.max(1,Math.round(Math.abs(x1-x0)/7));
      for(var j=0;j<m;j++){var f=j/m,x=x0+(x1-x0)*f,y=y0+(y1-y0)*f+(j?(R()-.5)*1.8:0);d+=(d?'L':'M')+x.toFixed(1)+' '+y.toFixed(1);}}
    d+='L'+n[n.length-2]+' '+n[n.length-1];p.setAttribute('d',d);});
  function ranges(arr,step,wId,bId,minFrac){var w='',b='';
    for(var x=arr[0][0];x<=arr[arr.length-1][0];x+=step){
      var i=0;while(i<arr.length-2&&arr[i+1][0]<x)i++;
      var a=arr[i],c=arr[i+1],f=(x-a[0])/Math.max(1,c[0]-a[0]);f=Math.max(0,Math.min(1,f));
      var top=a[1]+(c[1]-a[1])*f,bot=a[2]+(c[2]-a[2])*f,len=(bot-top)*(minFrac+.5*R()),y=top+R()*(bot-top-len);
      var d='M'+x.toFixed(1)+' '+y.toFixed(1)+'V'+(y+len).toFixed(1);
      if(R()<.55)w+=d;else b+=d;}
    document.getElementById(wId).setAttribute('d',w);document.getElementById(bId).setAttribute('d',b);}
  var A=[[95,480,800],[110,520,800],[150,500,680],[200,530,720],[220,680,860],[300,740,1000],[325,680,1000],[345,570,720],[380,545,700],[400,700,800],[500,760,940],[600,740,900],[630,770,840],[650,910,1040],[680,1130,1230],[705,920,1100],[730,620,800],[760,800,900],[820,980,1200],[840,800,1030],[885,830,1030],[892,610,800],[925,700,930],[950,280,800],[975,310,470],[1015,520,700],[1040,750,810],[1095,800,950],[1130,680,780],[1190,470,680],[1250,300,500],[1295,500,590],[1340,250,400],[1410,210,340],[1430,450,550],[1490,550,680],[1560,650,800]];
  var B=[[10,490,800],[30,480,620],[120,480,620],[130,610,770],[175,610,770],[185,900,990],[220,850,970],[280,850,1000],[300,780,950],[340,780,950],[370,680,800],[400,680,800],[410,860,970],[430,840,900],[540,840,900],[555,650,850],[580,600,680],[610,680,800],[635,400,600],[660,450,570],[700,450,570],[710,400,490],[750,400,490],[790,310,510],[820,500,570],[855,500,570],[865,300,480],[880,200,300],[896,120,300],[910,250,300]];
  var M=A.map(function(r){return[r[0]/1.568,400+r[1]/3,400+r[2]/3];}).concat(B.map(function(r){return[1000+r[0]/1.867,400+r[1]/3,400+r[2]/3];}));
  ranges(M,2.9,'m-w','m-b',.3);
  var T=[[100,570,620],[230,590,625],[250,530,600],[270,530,600],[315,550,600],[320,590,730],[340,680,720],[400,680,720],[425,740,790],[480,730,790],[490,720,795],[600,735,790],[610,640,770],[630,630,700],[650,560,650],[665,550,590],[675,440,600],[685,440,640],[700,450,490],[790,450,490],[800,345,450],[815,370,450],[830,440,520],[868,470,525]].map(function(r){return[1800+r[0]/2.227,r[1]/2.45,r[2]/2.45];});
  ranges(T,1.8,'t-w','t-b',.3);
  var P=[[210,90,78],[240,150,95],[285,210,130],[320,130,95],[350,180,130],[380,250,140],[430,260,150],[460,300,170],[485,430,230],[500,530,300],[520,555,330],[560,645,320],[600,510,260],[640,540,290],[700,620,330],[740,590,310],[770,670,360],[800,650,360],[840,590,330],[870,640,400],[878,720,415],[886,640,390],[900,550,300],[930,500,240],[950,380,190],[980,230,130],[1000,150,100],[1040,180,85],[1080,160,100],[1130,130,90],[1200,85,78],[1215,80,78]];
  var pg=document.getElementById('profile');
  for(var zy=210;zy<1215;zy+=7.5){var i=0;while(i<P.length-2&&P[i+1][0]<zy)i++;var a=P[i],c=P[i+1],f=(zy-a[0])/(c[0]-a[0]);
    var bl=(a[1]+(c[1]-a[1])*f)/1.568+(R()-.5)*9,gr=(a[2]+(c[2]-a[2])*f)/1.568+(R()-.5)*5,y=400+zy/3;
    el(pg,'rect',{x:49,y:y.toFixed(1),width:Math.max(1,bl-49).toFixed(1),height:2.6,fill:'rgba(58,95,214,.92)'});
    var col=(zy>495&&zy<935)?'rgba(214,214,218,.96)':'rgba(170,170,174,.95)';
    el(pg,'rect',{x:49,y:y.toFixed(1),width:Math.max(1,gr-49).toFixed(1),height:2.6,fill:col});}
  for(var zz=235;zz<1000;zz+=27){el(pg,'rect',{x:49,y:(400+zz/3).toFixed(1),width:(zz>495&&zz<935?150:35),height:1,fill:'rgba(255,255,255,.3)'});}
  var C=[[10,560],[20,545],[35,630],[50,680],[65,630],[80,690],[95,700],[110,665],[130,615],[150,625],[170,660],[190,620],[210,625],[230,610],[250,650],[270,660],[290,690],[310,650],[328,600],[336,500],[350,580],[370,610],[388,570],[408,540],[430,525],[445,590],[462,600],[480,600],[495,655],[520,640],[545,665],[565,670],[585,600],[600,615],[606,410],[615,310],[628,295],[636,210],[646,350],[657,460],[667,535],[676,525],[688,380],[698,370],[709,325],[719,390],[730,400],[740,570],[750,525],[760,580],[770,600],[780,535],[792,565],[802,610],[812,680],[822,735],[832,685],[842,680],[852,735],[864,700],[874,640],[884,700],[895,685],[905,730],[915,700],[935,750],[945,680],[956,670],[966,790],[977,765],[988,735]];
  var bc=document.getElementById('b-c'),vg=document.getElementById('vol');
  var V={606:210,615:212,624:200,636:150,646:290,657:130,667:180,676:85,688:90,698:60,709:100,719:55,738:130,750:50,770:110,812:75,822:155,832:50,336:105,398:60,10:115,20:95,35:65};
  function Y(z){return 640+z/2.635;}
  for(var n=0;n<C.length;n++){var zx=C[n][0],cl=C[n][1],op=n?C[n-1][1]:cl+15,up=cl<op;
    var x=1840+zx/2.36,t=Math.min(cl,op),bt=Math.max(cl,op),hi=t-R()*40,lo=bt+R()*40;
    var color=up?'#fff':'#3a66f5';
    el(bc,'line',{x1:x,x2:x,y1:Y(hi),y2:Y(lo),stroke:color,'stroke-width':1});
    el(bc,'rect',{x:x-1.7,y:Y(t),width:3.4,height:Math.max(1.5,Y(bt)-Y(t)),fill:color});
    var h=V[zx]||(12+R()*38);
    el(vg,'rect',{x:x-1.6,y:1078-h/2.635,width:3.2,height:h/2.635,fill:up?'#9a9a9c':'#2c45a0'});}
  var S=[[15,1460],[25,1440],[40,1425],[65,1413],[80,1420],[100,1425],[150,1415],[200,1405],[250,1398],[300,1395],[330,1392],[380,1388],[400,1380],[430,1362],[500,1362],[550,1365],[595,1360],[605,1340],[615,1310],[628,1280],[637,1260],[650,1240],[665,1225],[700,1222],[710,1210],[725,1197],[750,1205],[775,1212],[820,1210],[830,1225],[860,1230],[920,1237],[960,1243],[990,1243]];
  var sg=document.getElementById('sub');
  for(var q=0,zq=15;zq<990;zq+=10.4){while(q<S.length-2&&S[q+1][0]<zq)q++;var a2=S[q],c2=S[q+1],f2=(zq-a2[0])/(c2[0]-a2[0]);var y2=a2[1]+(c2[1]-a2[1])*f2,y3=a2[1]+(c2[1]-a2[1])*Math.min(1,(zq+10.4-a2[0])/(c2[0]-a2[0]));
    var up2=y3<y2-.5||(R()<.6);
    el(sg,'rect',{x:1840+zq/2.36-1.6,y:640+Math.min(y2,y3)/2.635,width:3.2,height:Math.max(1.2,Math.abs(y3-y2)/2.635),fill:up2?'#fff':'#3a66f5'});}
})();
</script>
</body>
</html>
